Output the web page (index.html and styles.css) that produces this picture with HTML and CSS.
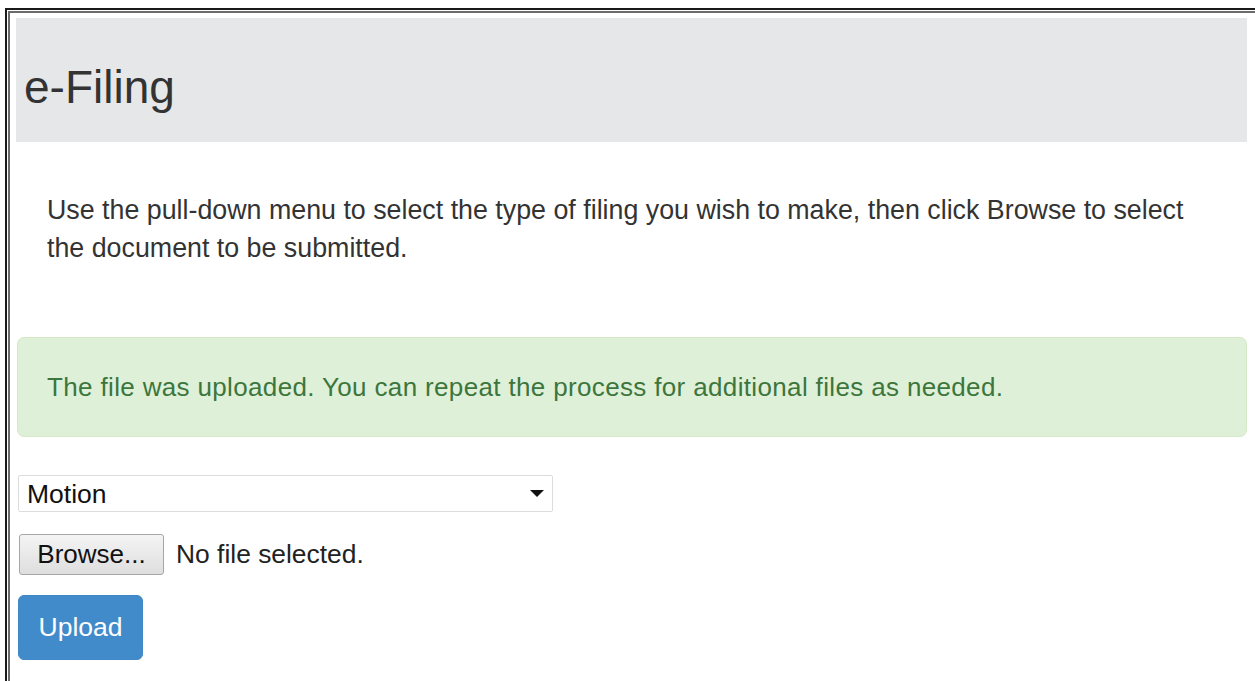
FILE: index.html
```html
<!DOCTYPE html>
<html lang="en">
<head>
<meta charset="utf-8">
<title>e-Filing</title>
<link rel="stylesheet" href="styles.css">
</head>
<body>
<div class="frame-outer">
  <div class="frame-inner">
    <div class="page">
      <header class="jumbo">
        <h1 class="title">e-Filing</h1>
      </header>

      <p class="intro">Use the pull-down menu to select the type of filing you wish to make, then click Browse to select the document to be submitted.</p>

      <div class="alert-success">The file was uploaded. You can repeat the process for additional files as needed.</div>

      <form class="upload-form">
        <div class="select-wrap">
          <select class="type-select">
            <option>Motion</option>
          </select>
          <svg class="select-arrow" width="14" height="8" viewBox="0 0 14 8"><path d="M0 0 L14 0 L7 7 Z" fill="#111"/></svg>
        </div>

        <div class="file-row">
          <button type="button" class="browse-btn">Browse...</button>
          <span class="file-name">No file selected.</span>
        </div>

        <button type="button" class="upload-btn">Upload</button>
      </form>
    </div>
  </div>
</div>
</body>
</html>
```

FILE: styles.css
```css
html, body {
  margin: 0;
  padding: 0;
  background: #ffffff;
}

body {
  font-family: "Liberation Sans", Arial, sans-serif;
  color: #333333;
  overflow: hidden;
}

/* double window frame along the top and left edges */
.frame-outer {
  margin: 8px 0 0 5px;
  border-top: 2px solid #1a1a1a;
  border-left: 2px solid #1a1a1a;
  padding: 1px 0 0 1px;
  height: 700px;
}

.frame-inner {
  border-top: 2px solid #6b6b6b;
  border-left: 2px solid #6b6b6b;
  height: 100%;
}

.page {
  padding: 5px 8px 0 6px;
}

.jumbo {
  background: #e6e7e8;
  height: 124px;
  display: flex;
  align-items: center;
  padding-left: 8px;
}

.title {
  margin: 0;
  font-size: 46px;
  font-weight: normal;
  color: #333333;
  line-height: 1;
  padding-top: 14px;
}

.intro {
  margin: 49px 0 0 0;
  padding: 0 30px 0 31px;
  font-size: 26.8px;
  line-height: 38px;
  color: #333333;
}

.alert-success {
  margin: 70px 0 0 1px;
  background: #dff0d8;
  border: 1px solid #d6e9c6;
  border-radius: 7px;
  color: #3c763d;
  font-size: 26px;
  letter-spacing: 0.35px;
  line-height: 30px;
  padding: 34px 29px 34px 29px;
}

.upload-form {
  margin-top: 38px;
  margin-left: 1px;
  display: flex;
  flex-direction: column;
  align-items: flex-start;
}

.select-wrap {
  position: relative;
  margin-left: 1px;
}

.type-select {
  appearance: none;
  -webkit-appearance: none;
  width: 535px;
  height: 37px;
  border: 1px solid #dcdcdc;
  border-radius: 2px;
  background: #ffffff;
  font-family: "Liberation Sans", Arial, sans-serif;
  font-size: 26.5px;
  color: #111111;
  padding: 0 0 0 8px;
  margin: 0;
  display: block;
}

.select-arrow {
  position: absolute;
  right: 9px;
  top: 15px;
  pointer-events: none;
}

.file-row {
  display: flex;
  align-items: center;
  margin-top: 22px;
  margin-left: 2px;
}

.browse-btn {
  width: 145px;
  height: 41px;
  border: 1px solid #a6a6a6;
  border-radius: 3px;
  background: linear-gradient(#f4f4f4, #dedede);
  font-family: "Liberation Sans", Arial, sans-serif;
  font-size: 26px;
  color: #111111;
  padding: 0;
  margin: 0;
}

.file-name {
  margin-left: 12px;
  font-size: 26.4px;
  color: #222222;
}

.upload-btn {
  margin-top: 20px;
  margin-left: 1px;
  width: 125px;
  height: 65px;
  border: 1px solid #3f87c6;
  border-radius: 6px;
  background: #428bca;
  color: #ffffff;
  font-family: "Liberation Sans", Arial, sans-serif;
  font-size: 26.5px;
  padding: 0;
}
```
